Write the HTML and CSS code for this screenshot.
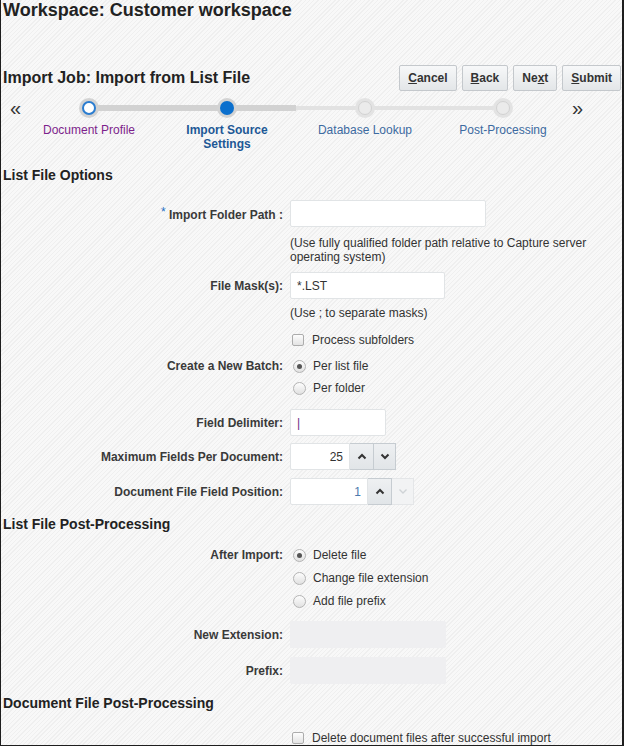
FILE: index.html
```html
<!DOCTYPE html>
<html lang="en">
<head>
    <meta charset="UTF-8">
    <meta name="viewport" content="width=device-width, initial-scale=1.0">
    <title>Import Job: Import from List File</title>
    <link rel="stylesheet" href="styles.css">
</head>
<body>
    <div class="page">
        <h1 class="title">Workspace: Customer workspace</h1>

        <div class="job-bar">
            <h2 class="job-title">Import Job: Import from List File</h2>
            <div class="actions">
                <button class="btn"><u>C</u>ancel</button>
                <button class="btn"><u>B</u>ack</button>
                <button class="btn">Ne<u>x</u>t</button>
                <button class="btn"><u>S</u>ubmit</button>
            </div>
        </div>

        <!-- wizard train -->
        <div class="train">
            <span class="train-nav prev">&laquo;</span>
            <div class="stop visited first">
                <div class="stop-head"><span class="dot"></span></div>
                <span class="stop-label">Document Profile</span>
            </div>
            <div class="stop current">
                <div class="stop-head"><span class="dot"></span></div>
                <span class="stop-label">Import Source Settings</span>
            </div>
            <div class="stop pending">
                <div class="stop-head"><span class="dot"></span></div>
                <span class="stop-label">Database Lookup</span>
            </div>
            <div class="stop pending last">
                <div class="stop-head"><span class="dot"></span></div>
                <span class="stop-label">Post-Processing</span>
            </div>
            <span class="train-nav next">&raquo;</span>
        </div>

        <h3 class="section first">List File Options</h3>

        <div class="row mt-16">
            <label class="field-label"><span class="req">*</span> Import Folder Path :</label>
            <div><input class="text" type="text" style="width: 196px"></div>
        </div>
        <div class="row mt-9">
            <span></span>
            <p class="help">(Use fully qualified folder path relative to Capture server operating system)</p>
        </div>
        <div class="row">
            <label class="field-label">File Mask(s):</label>
            <div><input class="text" type="text" value="*.LST" style="width: 155px"></div>
        </div>
        <div class="row mt-7">
            <span></span>
            <p class="help">(Use ; to separate masks)</p>
        </div>
        <div class="row mt-10">
            <span></span>
            <label class="choice"><span class="check"></span>Process subfolders</label>
        </div>
        <div class="row top mt-6">
            <label class="field-label choice-label">Create a New Batch:</label>
            <div class="choices">
                <label class="choice"><span class="radio on"></span>Per list file</label>
                <label class="choice"><span class="radio"></span>Per folder</label>
            </div>
        </div>
        <div class="row mt-11">
            <label class="field-label">Field Delimiter:</label>
            <div><input class="text delim" type="text" value="|" style="width: 96px"></div>
        </div>
        <div class="row mt-7">
            <label class="field-label">Maximum Fields Per Document:</label>
            <div class="spin">
                <input class="text num" type="text" value="25" style="width: 60px">
                <button class="spin-btn up"><svg width="10" height="7" viewBox="0 0 10 7"><polyline points="1.5,5.5 5,2 8.5,5.5"/></svg></button>
                <button class="spin-btn down"><svg width="10" height="7" viewBox="0 0 10 7"><polyline points="1.5,1.5 5,5 8.5,1.5"/></svg></button>
            </div>
        </div>
        <div class="row">
            <label class="field-label">Document File Field Position:</label>
            <div class="spin">
                <input class="text num blue" type="text" value="1" style="width: 78px">
                <button class="spin-btn up"><svg width="10" height="7" viewBox="0 0 10 7"><polyline points="1.5,5.5 5,2 8.5,5.5"/></svg></button>
                <button class="spin-btn down off"><svg width="10" height="7" viewBox="0 0 10 7"><polyline points="1.5,1.5 5,5 8.5,1.5"/></svg></button>
            </div>
        </div>

        <h3 class="section">List File Post-Processing</h3>

        <div class="row top mt-12">
            <label class="field-label choice-label">After Import:</label>
            <div class="choices wide">
                <label class="choice"><span class="radio on"></span>Delete file</label>
                <label class="choice"><span class="radio"></span>Change file extension</label>
                <label class="choice"><span class="radio"></span>Add file prefix</label>
            </div>
        </div>
        <div class="row mt-10">
            <label class="field-label">New Extension:</label>
            <div><input class="text disabled" type="text" disabled style="width: 156px"></div>
        </div>
        <div class="row mt-9">
            <label class="field-label">Prefix:</label>
            <div><input class="text disabled" type="text" disabled style="width: 156px"></div>
        </div>

        <h3 class="section">Document File Post-Processing</h3>

        <div class="row mt-16">
            <span></span>
            <label class="choice"><span class="check"></span>Delete document files after successful import</label>
        </div>
    </div>
</body>
</html>
```

FILE: styles.css
```css
body {
    margin: 0;
    font-family: "Liberation Sans", Arial, sans-serif;
    font-size: 12px;
    color: #333;
}
.page {
    width: 624px;
    height: 746px;
    box-sizing: border-box;
    overflow: hidden;
    padding-left: 2px;
    border-left: 1px solid #1e1e1e;
    border-right: 2px solid #1e1e1e;
    border-bottom: 1px solid #1e1e1e;
    background: repeating-linear-gradient(135deg, #f8f8f8 0px, #f8f8f8 2px, #efefef 2px, #efefef 3px);
}
.title {
    margin: 0;
    font-size: 18px;
    line-height: 20px;
    color: #222;
}

/* header row with the job name and buttons */
.job-bar {
    display: flex;
    justify-content: space-between;
    align-items: center;
    margin-top: 45px;
    padding-right: 1px;
}
.job-title {
    margin: 0;
    font-size: 16px;
    color: #222;
}
.actions {
    display: flex;
    gap: 5px;
}
.btn {
    height: 26px;
    padding: 0 8px;
    font-family: inherit;
    font-size: 12px;
    font-weight: bold;
    color: #333;
    background: linear-gradient(#f7f8f9, #e3e6e8);
    border: 1px solid #c4c8cc;
    border-radius: 2px;
}

/* train */
.train {
    display: flex;
    align-items: flex-start;
    margin-top: 7px;
}
.train-nav {
    font-size: 20px;
    line-height: 20px;
    color: #333;
}
.train-nav.prev {
    width: 17px;
    box-sizing: border-box;
    padding-left: 7px;
}
.train-nav.next {
    width: 10px;
    text-align: center;
}
.stop {
    width: 138px;
    text-align: center;
}
.stop-head {
    height: 20px;
    display: flex;
    justify-content: center;
    align-items: center;
    background: linear-gradient(#d2d2d2, #d2d2d2) center / 100% 6px no-repeat;
}
.stop.pending .stop-head {
    background: linear-gradient(#e2e2e2, #e2e2e2) center / 100% 4px no-repeat;
}
.stop.first .stop-head {
    background-size: 50% 6px;
    background-position: right center;
}
.stop.pending.last .stop-head {
    background-size: 50% 4px;
    background-position: left center;
}
.dot {
    width: 14px;
    height: 14px;
    box-sizing: border-box;
    border-radius: 50%;
    box-shadow: 0 0 0 3px #d3d3d3;
}
.visited .dot {
    background: #fff;
    border: 2px solid #2b7dd0;
}
.current .dot {
    background: #0b6fcd;
}
.pending .dot {
    background: #ebebeb;
    border: 1px solid #d2d2d2;
    box-shadow: 0 0 0 3px #e3e3e3;
}
.stop-label {
    display: block;
    margin-top: 5px;
    padding: 0 12px;
    line-height: 14px;
    color: #3c6aa0;
}
.visited .stop-label {
    color: #7d1f8c;
}
.current .stop-label {
    color: #1d5896;
    font-weight: bold;
}

/* form */
.section {
    margin: 10px 0 0;
    font-size: 14px;
    line-height: 18px;
    color: #222;
}
.section.first {
    margin-top: 15px;
}
.row {
    display: grid;
    grid-template-columns: 280px 1fr;
    column-gap: 7px;
    align-items: center;
    margin-top: 8px;
}
.row.top {
    align-items: start;
}
.mt-6 { margin-top: 6px; }
.mt-7 { margin-top: 7px; }
.mt-9 { margin-top: 9px; }
.mt-10 { margin-top: 10px; }
.mt-11 { margin-top: 11px; }
.mt-12 { margin-top: 12px; }
.mt-16 { margin-top: 16px; }
.field-label {
    text-align: right;
    font-weight: bold;
    color: #3a3a3a;
}
.choice-label {
    line-height: 20px;
}
.req {
    color: #1f6fc5;
    font-weight: normal;
    vertical-align: 3px;
}
.text {
    display: block;
    height: 27px;
    box-sizing: border-box;
    padding: 0 6px;
    font-family: inherit;
    font-size: 12px;
    color: #333;
    background: #fff;
    border: 1px solid #e1e4e6;
    border-radius: 2px;
}
.text.delim {
    color: #6b2d84;
}
.text.num {
    text-align: right;
}
.text.blue {
    color: #4b79ad;
}
.text.disabled {
    background: #efeff1;
    border-color: #efeff1;
}
.help {
    margin: 0;
    max-width: 305px;
    line-height: 14px;
}
.choices {
    display: flex;
    flex-direction: column;
    gap: 2px;
}
.choices.wide {
    gap: 3px;
}
.choice {
    display: flex;
    align-items: center;
    height: 20px;
}
.check {
    width: 10px;
    height: 10px;
    margin: 0 8px 0 2px;
    border: 1px solid #acacac;
    border-radius: 2px;
    background: linear-gradient(#fdfdfd, #e3e3e3);
}
.radio {
    width: 11px;
    height: 11px;
    margin: 0 7px 0 3px;
    border: 1px solid #b4b4b4;
    border-radius: 50%;
    background: linear-gradient(#fdfdfd, #e1e1e1);
    display: flex;
    align-items: center;
    justify-content: center;
}
.radio.on::after {
    content: "";
    width: 5px;
    height: 5px;
    border-radius: 50%;
    background: #555;
}

/* number spinner */
.spin {
    display: flex;
}
.spin .text {
    border-radius: 2px 0 0 2px;
}
.spin-btn {
    width: 24px;
    height: 27px;
    padding: 0;
    display: flex;
    align-items: center;
    justify-content: center;
    background: linear-gradient(#eef0f2, #e1e5e8);
    border: 1px solid #c6ccd1;
    border-left: none;
}
.spin-btn.down {
    width: 22px;
}
.spin-btn svg polyline {
    fill: none;
    stroke: #333;
    stroke-width: 2;
}
.spin-btn.off {
    background: #f2f3f4;
    border-color: #e4e6e8;
}
.spin-btn.off svg polyline {
    stroke: #cfd3d6;
    stroke-width: 1.4;
}
```
